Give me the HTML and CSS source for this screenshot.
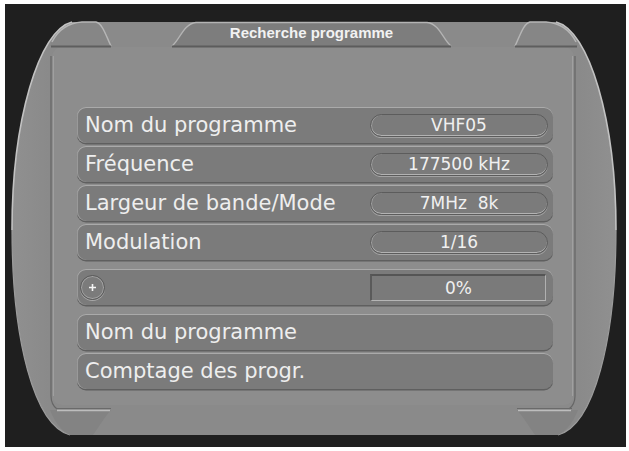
FILE: index.html
```html
<!DOCTYPE html>
<html>
<head>
<meta charset="utf-8">
<link rel="stylesheet" href="styles.css">
</head>
<body>
<div class="screen">
  <svg class="frame" width="621" height="443" viewBox="5 4 621 443">
    <defs>
      <linearGradient id="rim" x1="0" y1="0" x2="1" y2="0">
        <stop offset="0" stop-color="#909090"/>
        <stop offset="0.06" stop-color="#8a8a8a"/>
        <stop offset="0.94" stop-color="#8a8a8a"/>
        <stop offset="1" stop-color="#909090"/>
      </linearGradient>
    </defs>
    <path d="M72,22 L556,22 C589,30 616,120 616,230 C616,340 594,425 558,435 L70,435 C34,425 12,340 12,230 C12,120 39,30 72,22 Z" fill="url(#rim)"/>
    <path d="M72,22 C39,30 12,120 12,230" fill="none" stroke="#c2c2c2" stroke-width="1.6"/>
    <path d="M556,22 C589,30 616,120 616,230" fill="none" stroke="#c2c2c2" stroke-width="1.6"/>
    <path d="M12,230 C12,340 34,425 70,435" fill="none" stroke="#9c9c9c" stroke-width="1.2"/>
    <path d="M616,230 C616,340 594,425 558,435" fill="none" stroke="#9c9c9c" stroke-width="1.2"/>
    <rect x="52" y="47" width="522" height="358" rx="10" fill="#8d8d8d"/>
    <path d="M51,56 L51,396 C51,402 53,406 57,409" fill="none" stroke="#666" stroke-width="1.2"/>
    <path d="M53.5,56 L53.5,396" fill="none" stroke="#a0a0a0" stroke-width="1"/>
    <path d="M575,56 L575,396 C575,402 573,406 569,409" fill="none" stroke="#666" stroke-width="1.2"/>
    <path d="M572.5,56 L572.5,396" fill="none" stroke="#a0a0a0" stroke-width="1"/>
    <!-- top left tab -->
    <path d="M50,46 C56,32 66,24 80,22 L96,22 C103,24 106,36 111,46 Z" fill="#868686"/>
    <path d="M52,42 C58,30 68,23 82,22 L96,22 C103,24 106,36 111,46" fill="none" stroke="#b6b6b6" stroke-width="1.4"/>
    <path d="M51,46.5 L111,46.5" stroke="#5e5e5e" stroke-width="2"/>
    <!-- top right tab -->
    <path d="M578,46 C572,32 562,24 548,22 L530,22 C523,24 520,36 515,46 Z" fill="#868686"/>
    <path d="M576,42 C570,30 560,23 546,22 L530,22 C523,24 520,36 515,46" fill="none" stroke="#b6b6b6" stroke-width="1.4"/>
    <path d="M515,46.5 L577,46.5" stroke="#5e5e5e" stroke-width="2"/>
    <!-- title tab -->
    <path d="M172,46 C180,40 183,24 196,22.5 L427,22.5 C440,24 443,40 451,46 Z" fill="#7d7d7d"/>
    <path d="M172,46 C180,40 183,24 196,22.5 L427,22.5 C440,24 443,40 451,46" fill="none" stroke="#b4b4b4" stroke-width="1.3"/>
    <path d="M172,46.5 L451,46.5" stroke="#5c5c5c" stroke-width="2"/>
    <!-- bottom tabs -->
    <path d="M50,410 L111,410 C104,418 98,428 93,435 L70,435 C60,430 54,420 50,410 Z" fill="#838383"/>
    <path d="M56,408.5 L111,408.5" stroke="#6a6a6a" stroke-width="1.2"/>
    <path d="M57,410.5 L110,410.5" stroke="#bdbdbd" stroke-width="1.4"/>
    <path d="M578,410 L517,410 C524,418 530,428 535,435 L558,435 C568,430 574,420 578,410 Z" fill="#838383"/>
    <path d="M572,408.5 L517,408.5" stroke="#6a6a6a" stroke-width="1.2"/>
    <path d="M571,410.5 L518,410.5" stroke="#bdbdbd" stroke-width="1.4"/>
  </svg>
  <div class="content">
    <div class="title">Recherche programme</div>
    <div class="rows">
      <div class="row"><span class="label">Nom du programme</span><span class="pill">VHF05</span></div>
      <div class="row"><span class="label">Fréquence</span><span class="pill">177500 kHz</span></div>
      <div class="row"><span class="label">Largeur de bande/Mode</span><span class="pill">7MHz&nbsp;&nbsp;8k</span></div>
      <div class="row"><span class="label">Modulation</span><span class="pill">1/16</span></div>
      <div class="row progress">
        <span class="knob"><svg width="9" height="9" viewBox="0 0 9 9"><path d="M4.5,1 V8 M1,4.5 H8" stroke="#f4f4f4" stroke-width="1.6"/></svg></span>
        <span class="bar">0%</span>
      </div>
      <div class="row info"><span class="label">Nom du programme</span></div>
      <div class="row"><span class="label">Comptage des progr.</span></div>
    </div>
  </div>
</div>
</body>
</html>
```
FILE: styles.css
```css
* { box-sizing: border-box; }
body {
  margin: 0;
  background: #ffffff;
  font-family: "DejaVu Sans", "Liberation Sans", sans-serif;
}
.screen {
  position: relative;
  width: 621px;
  height: 443px;
  margin: 4px 0 0 5px;
  background: #1f1f1f;
  overflow: hidden;
}
.frame {
  position: absolute;
  left: 0;
  top: 0;
}
.content {
  position: relative;
  padding: 18px 0 0 72px;
}
.title {
  width: 279px;
  margin-left: 95px;
  height: 25px;
  line-height: 22px;
  text-align: center;
  font-family: "Liberation Sans", Arial, sans-serif;
  font-weight: bold;
  font-size: 15px;
  color: #f2f2f2;
}
.rows {
  margin-top: 60px;
  width: 476px;
  display: flex;
  flex-direction: column;
  gap: 3px;
}
.row {
  height: 36px;
  border-radius: 9px;
  background: #7b7b7b;
  display: flex;
  align-items: center;
  justify-content: space-between;
  padding: 0 5px 0 8px;
  color: #eeeeee;
  font-size: 21px;
  box-shadow: inset 0 1px 0 #aaaaaa, inset 1px 0 0 #9a9a9a, 0 1.5px 0 #5f5f5f;
}
.label {
  white-space: nowrap;
}
.pill {
  width: 178px;
  height: 23px;
  border-radius: 12px;
  border: 1px solid #5c5c5c;
  box-shadow: inset 0 -1px 0 #b3b3b3, inset 1px 0 0 #9c9c9c, 0 1px 0 #a3a3a3;
  text-align: center;
  font-size: 17px;
  line-height: 21px;
  color: #f0f0f0;
}
.row.progress {
  margin-top: 6px;
  padding: 0 7px 0 3px;
}
.knob {
  width: 25px;
  height: 25px;
  border-radius: 50%;
  border: 1px solid #5a5a5a;
  box-shadow: inset 0 0 0 1px #a2a2a2, 0 1px 0 #a8a8a8;
  display: flex;
  align-items: center;
  justify-content: center;
}
.bar {
  width: 176px;
  height: 27px;
  background: #7a7a7a;
  border-top: 2px solid #555555;
  border-left: 2px solid #5a5a5a;
  border-bottom: 1px solid #b5b5b5;
  border-right: 1px solid #b0b0b0;
  text-align: center;
  font-size: 17px;
  line-height: 24px;
  color: #f0f0f0;
}
.row.info {
  margin-top: 6px;
}
```
